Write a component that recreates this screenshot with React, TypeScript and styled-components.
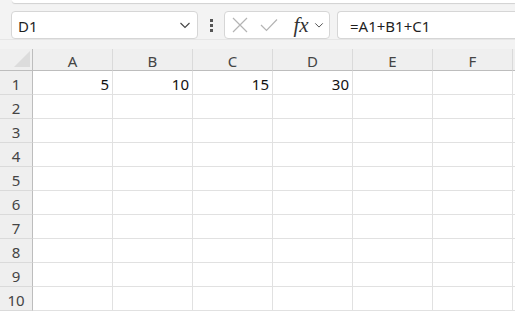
import React from "react";
import styled, { createGlobalStyle } from "styled-components";

const GlobalStyle = createGlobalStyle`
  html, body {
    margin: 0;
    padding: 0;
    background: #f3f3f3;
    font-family: "Noto Sans", "Open Sans", sans-serif;
    overflow: hidden;
  }
`;

const Page = styled.div`
  width: 515px;
  height: 311px;
  display: flex;
  flex-direction: column;
  overflow: hidden;
`;

const RibbonEdge = styled.div`
  height: 12px;
  padding-left: 12px;
  box-sizing: border-box;
`;

const RibbonPanel = styled.div`
  height: 3px;
  background: #ffffff;
  border-bottom-left-radius: 4px;
  box-shadow: 0 1px 1px rgba(0, 0, 0, 0.14);
`;

const Toolbar = styled.div`
  height: 28px;
  display: flex;
  align-items: stretch;
  padding-left: 11px;
`;

const Field = styled.div<{ $width?: number; $grow?: boolean }>`
  box-sizing: border-box;
  height: 28px;
  background: #ffffff;
  border: 1px solid #d6d6d6;
  border-radius: 4px;
  display: flex;
  align-items: center;
  ${({ $width }) => ($width ? `width: ${$width}px;` : "")}
  ${({ $grow }) => ($grow ? "flex: 1; border-right: none; border-radius: 4px 0 0 4px;" : "")}
`;

const NameText = styled.span`
  flex: 1;
  padding-left: 6px;
  padding-top: 1px;
  font-size: 15px;
  color: #1f1f1f;
`;

const FormulaText = styled.span`
  padding-left: 12px;
  padding-top: 1px;
  font-size: 15px;
  color: #1f1f1f;
`;

const Grip = styled.div`
  width: 26px;
  display: flex;
  flex-direction: column;
  align-items: center;
  justify-content: center;
  gap: 2px;
  span {
    width: 3px;
    height: 3px;
    background: #555;
  }
`;

const IconSlot = styled.div<{ $w: number; $ml?: number }>`
  width: ${({ $w }) => $w}px;
  margin-left: ${({ $ml }) => $ml ?? 0}px;
  display: flex;
  align-items: center;
  justify-content: center;
`;

const Fx = styled.span`
  font-family: "Liberation Serif", "DejaVu Serif", serif;
  font-style: italic;
  font-size: 21px;
  color: #333;
  line-height: 1;
`;

const Gap = styled.div<{ $w: number }>`
  width: ${({ $w }) => $w}px;
`;

const Spacer = styled.div`
  height: 10px;
  border-top: 1px solid #e6e6e6;
  box-sizing: border-box;
`;

const Sheet = styled.div`
  display: grid;
  grid-template-columns: 33px repeat(6, 80px) 1fr;
  grid-template-rows: 22px repeat(10, 24px);
  background: #ffffff;
`;

const Corner = styled.div`
  background: #efefef;
  border-right: 1px solid #bdbdbd;
  border-bottom: 1px solid #bdbdbd;
  box-sizing: border-box;
  position: relative;
  &::after {
    content: "";
    position: absolute;
    right: 2px;
    bottom: 3px;
    width: 0;
    height: 0;
    border-left: 16px solid transparent;
    border-bottom: 16px solid #dcdcdc;
  }
`;

const ColHead = styled.div`
  background: #efefef;
  border-right: 1px solid #dadada;
  border-bottom: 1px solid #bdbdbd;
  box-sizing: border-box;
  display: flex;
  align-items: center;
  justify-content: center;
  padding-top: 2px;
  font-size: 15px;
  color: #444;
`;

const RowHead = styled.div`
  background: #efefef;
  border-right: 1px solid #bdbdbd;
  border-bottom: 1px solid #dadada;
  box-sizing: border-box;
  display: flex;
  align-items: center;
  justify-content: center;
  padding-top: 2px;
  font-size: 15px;
  color: #444;
`;

const Cell = styled.div`
  border-right: 1px solid #e1e1e1;
  border-bottom: 1px solid #e1e1e1;
  box-sizing: border-box;
  display: flex;
  align-items: center;
  justify-content: flex-end;
  padding: 2px 3px 0 0;
  font-size: 15px;
  color: #111;
`;

const Filler = styled.div<{ $head?: boolean }>`
  background: ${({ $head }) => ($head ? "#efefef" : "#ffffff")};
  border-bottom: 1px solid ${({ $head }) => ($head ? "#bdbdbd" : "#e1e1e1")};
  box-sizing: border-box;
`;

const Chevron = ({ size = 12 }: { size?: number }) => (
  <svg width={size} height={size} viewBox="0 0 12 12">
    <path d="M1.5 4 L6 8.5 L10.5 4" fill="none" stroke="#444" strokeWidth="1.1" />
  </svg>
);

const columns = ["A", "B", "C", "D", "E", "F"];
const values: Record<string, string> = { A1: "5", B1: "10", C1: "15", D1: "30" };

const App = () => {
  return (
    <Page>
      <GlobalStyle />
      <RibbonEdge>
        <RibbonPanel />
      </RibbonEdge>
      <Toolbar>
        <Field $width={187}>
          <NameText>D1</NameText>
          <IconSlot $w={24}>
            <Chevron />
          </IconSlot>
        </Field>
        <Grip>
          <span />
          <span />
          <span />
        </Grip>
        <Field $width={106}>
          <IconSlot $w={18} $ml={6}>
            <svg width="16" height="16" viewBox="0 0 16 16">
              <path d="M1 1 L15 15 M15 1 L1 15" stroke="#b4b4b4" strokeWidth="1.2" />
            </svg>
          </IconSlot>
          <IconSlot $w={20} $ml={10}>
            <svg width="18" height="14" viewBox="0 0 18 14">
              <path d="M1 7 L6.5 12.5 L17 1.5" fill="none" stroke="#b4b4b4" strokeWidth="1.2" />
            </svg>
          </IconSlot>
          <IconSlot $w={22} $ml={11}>
            <Fx>fx</Fx>
          </IconSlot>
          <IconSlot $w={12} $ml={1}>
            <Chevron size={10} />
          </IconSlot>
        </Field>
        <Gap $w={7} />
        <Field $grow>
          <FormulaText>=A1+B1+C1</FormulaText>
        </Field>
      </Toolbar>
      <Spacer />
      <Sheet>
        <Corner />
        {columns.map((c) => (
          <ColHead key={c}>{c}</ColHead>
        ))}
        <Filler $head />
        {Array.from({ length: 10 }, (_, i) => i + 1).map((r) => (
          <React.Fragment key={r}>
            <RowHead>{r}</RowHead>
            {columns.map((c) => (
              <Cell key={c}>{values[`${c}${r}`] ?? ""}</Cell>
            ))}
            <Filler />
          </React.Fragment>
        ))}
      </Sheet>
    </Page>
  );
};

export default App;
